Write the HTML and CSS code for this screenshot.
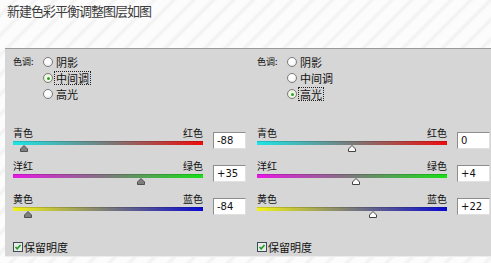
FILE: index.html
```html
<html>
  <head>
    <link rel="stylesheet" href="styles.css">
  </head>
  <body>
    <div class="page">
      <div class="title">新建色彩平衡调整图层如图</div>

      <div class="panel">
        <!-- left: midtones -->
        <div class="col">
          <div class="tone">
            <div class="tone-label">色调:</div>
            <div class="options">
              <div class="opt"><span class="radio"></span><span class="opt-text">阴影</span></div>
              <div class="opt"><span class="radio on"></span><span class="opt-text focus">中间调</span></div>
              <div class="opt"><span class="radio"></span><span class="opt-text">高光</span></div>
            </div>
          </div>

          <div class="slider">
            <div class="track">
              <div class="ends"><span>青色</span><span>红色</span></div>
              <div class="bar cyan-red"></div>
              <div class="knob-row">
                <svg class="knob" style="left:6%" width="8" height="7" viewBox="0 0 8 7"><path d="M4 0.5 L7.5 4 V6.5 H0.5 V4 Z"/></svg>
              </div>
            </div>
            <div class="value">-88</div>
          </div>

          <div class="slider">
            <div class="track">
              <div class="ends"><span>洋红</span><span>绿色</span></div>
              <div class="bar magenta-green"></div>
              <div class="knob-row">
                <svg class="knob" style="left:67.5%" width="8" height="7" viewBox="0 0 8 7"><path d="M4 0.5 L7.5 4 V6.5 H0.5 V4 Z"/></svg>
              </div>
            </div>
            <div class="value">+35</div>
          </div>

          <div class="slider">
            <div class="track">
              <div class="ends"><span>黄色</span><span>蓝色</span></div>
              <div class="bar yellow-blue"></div>
              <div class="knob-row">
                <svg class="knob" style="left:8%" width="8" height="7" viewBox="0 0 8 7"><path d="M4 0.5 L7.5 4 V6.5 H0.5 V4 Z"/></svg>
              </div>
            </div>
            <div class="value">-84</div>
          </div>

          <div class="keep">
            <svg class="check" width="10" height="10" viewBox="0 0 10 10">
              <rect x="0.5" y="0.5" width="9" height="9" fill="#e4ece4" stroke="#3c4a5a"/>
              <path d="M2.5 5 L4.2 6.8 L7.5 3" fill="none" stroke="#1f9a2a" stroke-width="1.6"/>
            </svg>
            <span>保留明度</span>
          </div>
        </div>

        <!-- right: highlights -->
        <div class="col right">
          <div class="tone">
            <div class="tone-label">色调:</div>
            <div class="options">
              <div class="opt"><span class="radio"></span><span class="opt-text">阴影</span></div>
              <div class="opt"><span class="radio"></span><span class="opt-text">中间调</span></div>
              <div class="opt"><span class="radio on"></span><span class="opt-text focus">高光</span></div>
            </div>
          </div>

          <div class="slider">
            <div class="track">
              <div class="ends"><span>青色</span><span>红色</span></div>
              <div class="bar cyan-red"></div>
              <div class="knob-row">
                <svg class="knob light" style="left:50%" width="8" height="7" viewBox="0 0 8 7"><path d="M4 0.5 L7.5 4 V6.5 H0.5 V4 Z"/></svg>
              </div>
            </div>
            <div class="value">0</div>
          </div>

          <div class="slider">
            <div class="track">
              <div class="ends"><span>洋红</span><span>绿色</span></div>
              <div class="bar magenta-green"></div>
              <div class="knob-row">
                <svg class="knob light" style="left:52%" width="8" height="7" viewBox="0 0 8 7"><path d="M4 0.5 L7.5 4 V6.5 H0.5 V4 Z"/></svg>
              </div>
            </div>
            <div class="value">+4</div>
          </div>

          <div class="slider">
            <div class="track">
              <div class="ends"><span>黄色</span><span>蓝色</span></div>
              <div class="bar yellow-blue"></div>
              <div class="knob-row">
                <svg class="knob light" style="left:61%" width="8" height="7" viewBox="0 0 8 7"><path d="M4 0.5 L7.5 4 V6.5 H0.5 V4 Z"/></svg>
              </div>
            </div>
            <div class="value">+22</div>
          </div>

          <div class="keep">
            <svg class="check" width="10" height="10" viewBox="0 0 10 10">
              <rect x="0.5" y="0.5" width="9" height="9" fill="#e4ece4" stroke="#3c4a5a"/>
              <path d="M2.5 5 L4.2 6.8 L7.5 3" fill="none" stroke="#1f9a2a" stroke-width="1.6"/>
            </svg>
            <span>保留明度</span>
          </div>
        </div>
      </div>
    </div>
  </body>
</html>
```

FILE: styles.css
```css
body {
  margin: 0;
  font-family: "Noto Sans CJK SC", "Liberation Sans", sans-serif;
  color: #111;
  background-color: #f9f9f9;
  background-image: repeating-linear-gradient(
    135deg,
    #fcfcfc 0px,
    #fcfcfc 8px,
    #f1f1f1 11px,
    #fcfcfc 14px
  );
}
.page {
  width: 491px;
  height: 263px;
  overflow: hidden;
}
.title {
  height: 48px;
  box-sizing: border-box;
  padding: 3px 0 0 7px;
  font-size: 13px;
  letter-spacing: -1px;
  line-height: 16px;
  color: #3c3c3c;
}
.panel {
  margin-left: 5px;
  height: 209px;
  box-sizing: border-box;
  background-color: #d6d6d6;
  border-top: 1px solid #9a9a9a;
  border-bottom: 1px solid #ececec;
  display: grid;
  grid-template-columns: 245px 241px;
}
.col {
  padding: 5px 0 0 8px;
}
.col.right {
  padding-left: 7px;
}

/* tone radios */
.tone {
  display: flex;
  margin-bottom: 24px;
}
.tone-label {
  width: 30px;
  font-size: 9px;
  line-height: 16px;
}
.opt {
  display: flex;
  align-items: center;
  height: 16px;
}
.radio {
  width: 8px;
  height: 8px;
  border: 1px solid #7b7b7b;
  border-radius: 50%;
  background: radial-gradient(circle at 40% 35%, #ffffff 40%, #dedede 100%);
  margin-right: 1px;
  position: relative;
}
.radio.on {
  background: radial-gradient(circle at 50% 50%, #f4fbe8 40%, #d8e4c8 100%);
}
.radio.on::after {
  content: "";
  position: absolute;
  left: 2.5px;
  top: 2.5px;
  width: 3px;
  height: 3px;
  border-radius: 50%;
  background-color: #2fa32f;
}
.opt-text {
  font-size: 11px;
  line-height: 12px;
  padding: 0 1px;
  border: 1px solid transparent;
}
.opt-text.focus {
  border: 1px dotted #222;
}

/* sliders */
.slider {
  display: grid;
  grid-template-columns: 190px 33px;
  column-gap: 10px;
  height: 33px;
}
.ends {
  display: flex;
  justify-content: space-between;
  height: 14px;
  font-size: 10px;
  line-height: 14px;
}
.bar {
  height: 4px;
  margin-top: 1px;
  border-top: 1px solid rgba(0, 0, 0, 0.15);
  box-sizing: border-box;
}
.cyan-red {
  background: linear-gradient(to right, #1de6e6, #7a7a7a 50%, #ee0d0d);
}
.magenta-green {
  background: linear-gradient(to right, #ea17e6, #7a7a7a 50%, #17e017);
}
.yellow-blue {
  background: linear-gradient(to right, #f2f21a, #7a7a7a 50%, #0a0ad0);
}
.knob-row {
  position: relative;
  height: 7px;
}
.knob {
  position: absolute;
  top: 0;
  transform: translateX(-50%);
  fill: #7f7f7f;
  stroke: #505050;
  stroke-width: 1;
}
.knob.light {
  fill: #ffffff;
  stroke: #444;
}
.value {
  margin-top: 6px;
  height: 17px;
  box-sizing: border-box;
  background-color: #fff;
  border: 1px solid #8d8d8d;
  border-right-color: #e0e0e0;
  border-bottom-color: #e0e0e0;
  padding-left: 3px;
  font-family: "DejaVu Sans", sans-serif;
  font-size: 10px;
  line-height: 15px;
  color: #111;
}

/* preserve luminosity */
.keep {
  display: flex;
  align-items: center;
  margin-top: 15px;
  height: 14px;
  font-size: 11px;
}
.check {
  margin-right: 1px;
}
```
